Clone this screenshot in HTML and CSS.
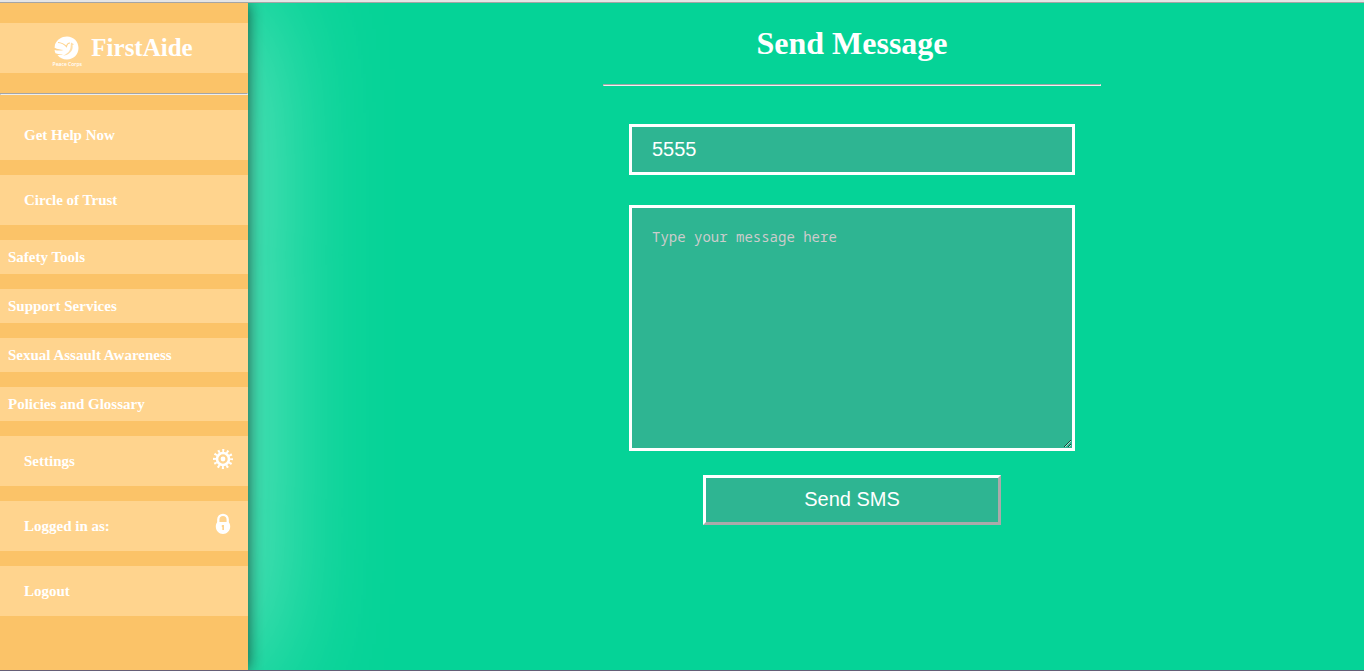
FILE: index.html
```html
<!DOCTYPE html>
<html lang="en">
<head>
<meta charset="utf-8">
<title>FirstAide - Send Message</title>
<link rel="stylesheet" href="styles.css">
</head>
<body>
<div class="page">
<aside class="sidebar">
  <a class="brand" href="#">
    <svg class="brand-logo" viewBox="0 0 32 34" aria-hidden="true">
      <path d="M4 9.500C6 4.500 10.500 1.500 16 1.500c6.500 0 11.500 5 11.500 11.500S22.500 24.500 16 24.500c-4 0-7.500-1.700-9.500-4.500 2 .2 4-.2 5.500-1-2.500.3-5 .2-7.500-.8-.5-1-.8-2-.9-3.200 3 .8 6 .8 9 0-3-.1-6-.8-9-2.200z" fill="#fff"/>
      <path d="M7 7.500c3 .2 6 1.500 8.500 4C16 9 17.500 8 19 8" fill="none" stroke="#ffd48e" stroke-width="1.200"/>
      <path d="M20 7.500l3 1.800-1.500 1c.8 4-1.500 7.500-5 9.200-1.500.8-3 1-4.500 1 4-1.500 7-4 7.500-8" fill="#ffd48e" fill-opacity=".75"/>
    </svg>
    <span class="brand-name">FirstAide</span>
    <span class="brand-caption">Peace Corps</span>
  </a>
  <hr class="sidebar-rule">
  <nav class="menu">
    <a class="menu-item" href="#">Get Help Now</a>
    <a class="menu-item" href="#">Circle of Trust</a>
    <button class="menu-item menu-group" type="button">Safety Tools</button>
    <button class="menu-item menu-group" type="button">Support Services</button>
    <button class="menu-item menu-group" type="button">Sexual Assault Awareness</button>
    <button class="menu-item menu-group" type="button">Policies and Glossary</button>
    <a class="menu-item" href="#">Settings
      <svg class="menu-icon" viewBox="0 0 20 20" fill="none" stroke="#fff" aria-hidden="true">
        <circle cx="10" cy="10" r="6" stroke-width="2.600"/>
        <circle cx="10" cy="10" r="8.500" stroke-width="3" stroke-dasharray="2 2.450" stroke-dashoffset="1"/>
        <circle cx="10" cy="10" r="2.400" fill="#fff" stroke="none"/>
      </svg>
    </a>
    <a class="menu-item" href="#">Logged in as:
      <svg class="menu-icon" viewBox="0 0 20 20" aria-hidden="true">
        <path d="M5.300 10V5.500a4.700 4.700 0 0 1 9.400 0V10" fill="none" stroke="#fff" stroke-width="2.300"/>
        <path fill="#fff" fill-rule="evenodd" d="M4.500 8h11c1.200 1.200 1.700 2.700 1.700 4.500 0 4.200-3.200 7.500-7.200 7.500s-7.200-3.300-7.200-7.500c0-1.800.5-3.300 1.700-4.500zM8.800 11v2h.5v3h1.700v-5z"/>
      </svg>
    </a>
    <a class="menu-item" href="#">Logout</a>
  </nav>
</aside>
<main class="content">
  <form class="message">
    <h1 class="title">Send Message</h1>
    <hr class="title-rule">
    <div class="fields">
      <input class="field" type="text" value="5555" aria-label="Recipient number">
      <textarea class="field field-area" placeholder="Type your message here" aria-label="Message"></textarea>
      <button class="send" type="button">Send SMS</button>
    </div>
  </form>
</main>
</div>
</body>
</html>
```
FILE: styles.css
```css
* {
  box-sizing: border-box;
}

body {
  margin: 0;
  min-height: 100vh;
  display: flex;
  border-top: 2px solid #e5e5e5;
  border-bottom: 1px solid #655f78;
  background: #05d397;
  font-family: "Liberation Serif", "Times New Roman", serif;
  color: #fff;
}

.page {
  flex: 1;
  display: flex;
  overflow: hidden;
  border-top: 1px solid #a5a5a5;
}

.sidebar {
  flex: none;
  width: 248px;
  padding-top: 20px;
  background: #fbc368;
  box-shadow: 0 0 15px rgba(0, 0, 0, 0.65), 0 0 140px rgba(255, 255, 255, 0.55);
  z-index: 1;
}

.brand {
  display: grid;
  grid-template-columns: 32px auto;
  grid-template-rows: 26px 6px;
  justify-content: center;
  align-content: start;
  column-gap: 8px;
  height: 50px;
  padding: 12px 4px 0 0;
  background: #ffd48e;
  color: #fff;
  text-decoration: none;
}

.brand-logo {
  width: 32px;
  height: 34px;
}

.brand-caption {
  grid-area: 2 / 1;
  font: 600 5px/6px "Open Sans", sans-serif;
  text-align: center;
  white-space: nowrap;
}

.brand-name {
  font-size: 25px;
  line-height: 26px;
  font-weight: 700;
}

.sidebar-rule {
  margin: 20px 0 15px;
  border: 1px solid;
  border-color: #a5a5a5 #eee #eee #a5a5a5;
}

.menu {
  display: flex;
  flex-direction: column;
  gap: 15px;
}

.menu-item {
  display: flex;
  justify-content: space-between;
  align-items: center;
  height: 50px;
  padding: 0 15px 0 24px;
  border: 0;
  background: #ffd48e;
  color: #fff;
  font: 700 15px "Liberation Serif", "Times New Roman", serif;
  text-align: left;
  text-decoration: none;
}

.menu-group {
  height: 34px;
  padding-left: 8px;
}

.menu-icon {
  width: 20px;
  height: 20px;
  margin-bottom: 4px;
  overflow: visible;
}

.content {
  flex: 1;
  padding-left: 92px;
}

.message {
  display: flex;
  flex-direction: column;
  align-items: center;
}

.title {
  margin: 22px 0 23px;
  font-size: 32px;
  line-height: 36px;
}

.title-rule {
  width: 498px;
  max-width: 100%;
  margin: 0 0 38px;
  border: 1px solid;
  border-color: #a5a5a5 #eee #eee #a5a5a5;
}

.fields {
  display: flex;
  flex-direction: column;
  align-items: center;
  width: 446px;
  max-width: 100%;
}

.field {
  width: 100%;
  height: 51px;
  margin: 0 0 30px;
  padding: 0 20px;
  border: 3px solid #fff;
  border-radius: 0;
  background: #2eb592;
  color: #fff;
  font: 20px "Liberation Sans", Arial, sans-serif;
}

.field-area {
  height: 246px;
  margin-bottom: 24px;
  padding: 20px;
  font: 14px/18px "Noto Sans Mono", "DejaVu Sans Mono", monospace;
}

.field-area::placeholder {
  color: #ccc;
}

.send {
  width: 298px;
  max-width: 100%;
  height: 50px;
  padding-bottom: 3px;
  border: 3px solid;
  border-color: #fff #aaa #aaa #fff;
  background: #2eb592;
  color: #fff;
  font: 20px "Liberation Sans", Arial, sans-serif;
}
```
